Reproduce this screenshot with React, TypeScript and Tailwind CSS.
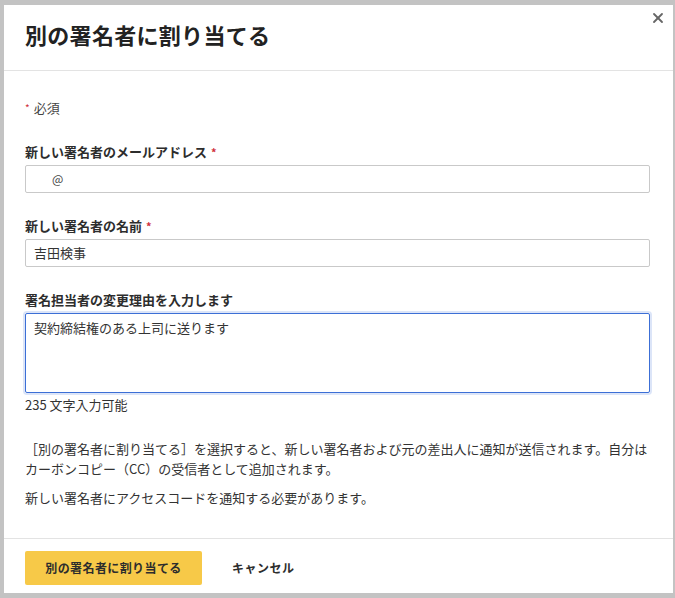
import React from 'react';
import { X } from 'lucide-react';

const Req = () => <span className="text-[#d0313c] text-[11px] ml-1 align-top">*</span>;

const Field: React.FC<{ label: string; required?: boolean; children: React.ReactNode; className?: string }> = ({ label, required, children, className }) => (
  <div className={className}>
    <div className="text-[13px] leading-5 font-bold text-[#2d2d2d]">
      {label}
      {required && <Req />}
    </div>
    <div className="mt-[3px]">{children}</div>
  </div>
);

const App: React.FC = () => {
  return (
    <div
      className="w-[675px] h-[598px] bg-[#c3c3c3] pt-[5px] pl-[4px] pr-[2px] pb-[5px]"
      style={{ fontFamily: '"Noto Sans CJK JP", "Noto Sans", sans-serif' }}
    >
      <div className="relative h-full bg-white flex flex-col text-[#333]">
        <button className="absolute top-[5px] right-[7px] text-[#666]">
          <X size={16} strokeWidth={2.75} />
        </button>

        <header className="h-[66px] shrink-0 border-b border-[#e3e3e3] px-[21px] pb-[6px] flex items-center">
          <h1 className="text-[22px] font-bold text-[#222] tracking-[0.3px]">別の署名者に割り当てる</h1>
        </header>

        <main className="flex-1 pl-[21px] pr-[23px] pt-[27px]">
          <div className="text-[13px] leading-5 text-[#444]">
            <span className="text-[#d0313c] text-[10px] align-top mr-1">*</span>必須
          </div>

          <Field label="新しい署名者のメールアドレス" required className="mt-6">
            <div className="h-[28px] border border-[#c9c9c9] rounded-[2px] pl-[26px] flex items-center text-[12px] text-[#444]">
              @
            </div>
          </Field>

          <Field label="新しい署名者の名前" required className="mt-[23px]">
            <div className="h-[28px] border border-[#c9c9c9] rounded-[2px] px-[8px] flex items-center text-[13px] text-[#333]">
              吉田検事
            </div>
          </Field>

          <Field label="署名担当者の変更理由を入力します" className="mt-[23px]">
            <div className="h-[80px] border border-[#3c6fd6] rounded-[2px] shadow-[0_0_0_2px_rgba(60,111,214,0.18)] px-[8px] pt-[4px] text-[13px] leading-5 text-[#333]">
              契約締結権のある上司に送ります
            </div>
          </Field>

          <div className="mt-[2px] text-[13px] leading-5 text-[#333]">235 文字入力可能</div>

          <p className="mt-6 text-[13px] leading-5 text-[#333]">
            ［別の署名者に割り当てる］を選択すると、新しい署名者および元の差出人に通知が送信されます。自分はカーボンコピー（CC）の受信者として追加されます。
          </p>
          <p className="mt-[9px] text-[13px] leading-5 text-[#333]">新しい署名者にアクセスコードを通知する必要があります。</p>
        </main>

        <footer className="h-[55px] shrink-0 border-t border-[#e3e3e3] px-[21px] pt-[12px] flex items-start gap-[30px]">
          <button className="h-[34px] w-[177px] rounded-[2px] bg-[#f7c948] text-[12px] font-bold text-[#2d2d2d] tracking-[0.4px]">
            別の署名者に割り当てる
          </button>
          <button className="h-[34px] text-[12px] font-bold text-[#2d2d2d] tracking-[0.5px]">キャンセル</button>
        </footer>
      </div>
    </div>
  );
};

export default App;
